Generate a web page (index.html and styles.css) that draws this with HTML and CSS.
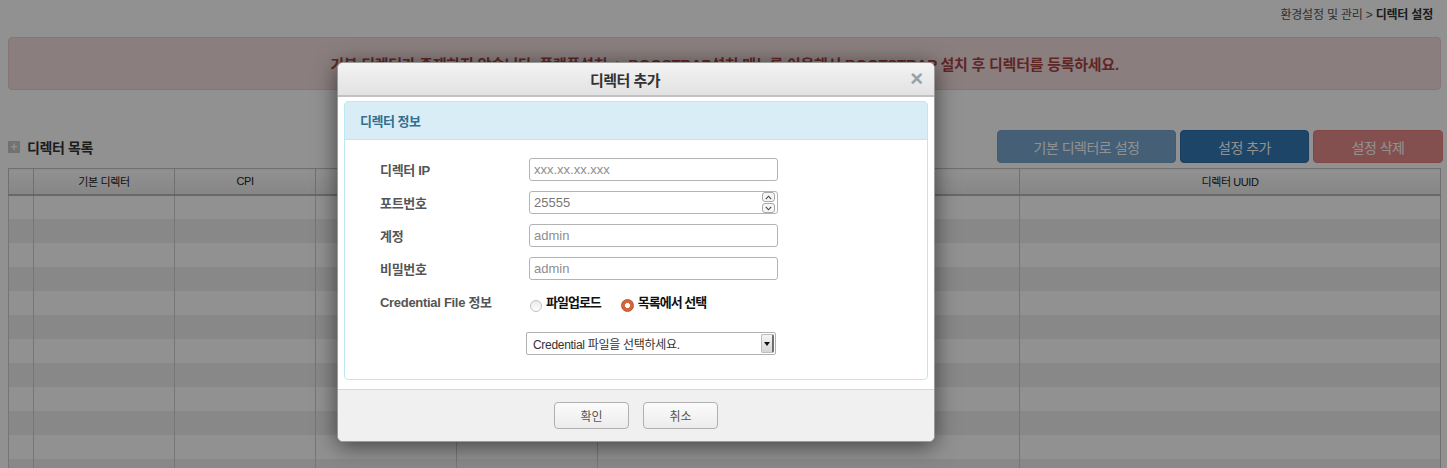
FILE: index.html
```html
<!DOCTYPE html>
<html lang="ko">
<head>
<meta charset="utf-8">
<title>디렉터 설정</title>
<link rel="stylesheet" href="styles.css">
</head>
<body>
<div class="page">
  <div class="breadcrumb"><span>환경설정 및 관리 &gt;&nbsp;</span><strong>디렉터 설정</strong></div>
  <div class="alert">기본 디렉터가 존재하지 않습니다. 플랫폼설치 -&gt; BOOSTRAP설치 메뉴를 이용해서 BOOTSTRAP 설치 후 디렉터를 등록하세요.</div>
  <div class="list-head">
    <h3 class="list-title"><span class="plus-icon">+</span>디렉터 목록</h3>
    <div class="actions">
      <button class="btn btn-primary is-disabled btn-default-set">기본 디렉터로 설정</button>
      <button class="btn btn-primary btn-add">설정 추가</button>
      <button class="btn btn-danger is-disabled btn-del">설정 삭제</button>
    </div>
  </div>
  <table class="grid">
    <colgroup>
      <col class="c-chk"><col class="c-std"><col class="c-std"><col class="c-std"><col class="c-std"><col class="c-wide"><col>
    </colgroup>
    <thead>
      <tr><th></th><th>기본 디렉터</th><th>CPI</th><th>디렉터 이름</th><th>디렉터 URL</th><th>디렉터 버전</th><th>디렉터 UUID</th></tr>
    </thead>
    <tbody>
      <tr><td></td><td></td><td></td><td></td><td></td><td></td><td></td></tr>
      <tr><td></td><td></td><td></td><td></td><td></td><td></td><td></td></tr>
      <tr><td></td><td></td><td></td><td></td><td></td><td></td><td></td></tr>
      <tr><td></td><td></td><td></td><td></td><td></td><td></td><td></td></tr>
      <tr><td></td><td></td><td></td><td></td><td></td><td></td><td></td></tr>
      <tr><td></td><td></td><td></td><td></td><td></td><td></td><td></td></tr>
      <tr><td></td><td></td><td></td><td></td><td></td><td></td><td></td></tr>
      <tr><td></td><td></td><td></td><td></td><td></td><td></td><td></td></tr>
      <tr><td></td><td></td><td></td><td></td><td></td><td></td><td></td></tr>
      <tr><td></td><td></td><td></td><td></td><td></td><td></td><td></td></tr>
      <tr><td></td><td></td><td></td><td></td><td></td><td></td><td></td></tr>
      <tr><td></td><td></td><td></td><td></td><td></td><td></td><td></td></tr>
    </tbody>
  </table>
</div>

<div class="overlay"></div>

<div class="modal">
  <div class="modal-header">
    <h4 class="modal-title">디렉터 추가</h4>
    <span class="close">×</span>
  </div>
  <div class="modal-body">
    <div class="panel">
      <div class="panel-heading">디렉터 정보</div>
      <div class="panel-body">
        <div class="form-row">
          <label class="form-label">디렉터 IP</label>
          <input class="field" type="text" placeholder="xxx.xx.xx.xxx">
        </div>
        <div class="form-row">
          <label class="form-label">포트번호</label>
          <div class="field field-number">
            <span class="num-value">25555</span>
            <span class="spin">
              <span class="spin-btn"><svg width="7" height="5" viewBox="0 0 7 5"><path d="M0.8 4.2 L3.5 1.2 L6.2 4.2" fill="none" stroke="#444" stroke-width="1.1"/></svg></span>
              <span class="spin-btn"><svg width="7" height="5" viewBox="0 0 7 5"><path d="M0.8 0.8 L3.5 3.8 L6.2 0.8" fill="none" stroke="#444" stroke-width="1.1"/></svg></span>
            </span>
          </div>
        </div>
        <div class="form-row">
          <label class="form-label">계정</label>
          <input class="field" type="text" placeholder="admin">
        </div>
        <div class="form-row">
          <label class="form-label">비밀번호</label>
          <input class="field" type="text" placeholder="admin">
        </div>
        <div class="form-row radio-row">
          <label class="form-label">Credential File 정보</label>
          <div class="radios">
            <span class="radio-opt"><span class="radio"></span><span class="radio-text">파일업로드</span></span>
            <span class="radio-opt"><span class="radio radio-on"></span><span class="radio-text">목록에서 선택</span></span>
          </div>
        </div>
        <div class="form-row select-row">
          <span class="form-label"></span>
          <div class="select">
            <span class="select-text">Credential 파일을 선택하세요.</span>
            <span class="select-arrow"><span class="tri"></span></span>
          </div>
        </div>
      </div>
    </div>
  </div>
  <div class="modal-footer">
    <button class="fbtn">확인</button>
    <button class="fbtn">취소</button>
  </div>
</div>
</body>
</html>
```

FILE: styles.css
```css
* { box-sizing: border-box; }

html, body {
  margin: 0;
  padding: 0;
}

body {
  width: 1447px;
  height: 468px;
  overflow: hidden;
  position: relative;
  background: #ffffff;
  color: #333;
  font-family: "Liberation Sans", "Noto Sans CJK KR", sans-serif;
}

.page {
  padding: 0 4px 0 8px;
}

/* breadcrumb */
.breadcrumb {
  height: 26px;
  display: flex;
  justify-content: flex-end;
  align-items: center;
  padding-right: 10px;
  font-size: 12px;
  color: #555;
  letter-spacing: -0.2px;
}
.breadcrumb strong { color: #333; }

/* alert */
.alert {
  margin: 11px 2px 0 0;
  height: 53px;
  display: flex;
  align-items: center;
  justify-content: center;
  background: #f2dede;
  border: 1px solid #ebccd1;
  border-radius: 4px;
  color: #a94442;
  font-size: 15px;
  font-weight: bold;
  letter-spacing: -0.25px;
}

/* list head */
.list-head {
  margin-top: 40px;
  height: 33px;
  display: flex;
  align-items: center;
}
.list-title {
  margin: 0;
  display: flex;
  align-items: center;
  gap: 7px;
  font-size: 14px;
  font-weight: bold;
  color: #333;
  letter-spacing: -0.4px;
}
.plus-icon {
  width: 12px;
  height: 12px;
  background: #c8c8c8;
  color: #fff;
  font-size: 12px;
  line-height: 12px;
  text-align: center;
  font-weight: bold;
  letter-spacing: 0;
}
.actions {
  margin-left: auto;
  display: flex;
  gap: 4px;
}
.btn {
  height: 33px;
  border: 1px solid transparent;
  border-radius: 4px;
  font-family: inherit;
  font-size: 14px;
  color: #fff;
  letter-spacing: -0.5px;
}
.btn-default-set { width: 179px; }
.btn-add { width: 129px; }
.btn-del { width: 130px; }
.btn-primary { background: #337ab7; border-color: #2e6da4; }
.btn-danger { background: #d9534f; border-color: #d43f3a; }
.is-disabled { opacity: 0.65; }

/* table */
.grid {
  margin-top: 5px;
  width: calc(100% - 2px);
  border-collapse: collapse;
  table-layout: fixed;
  border: 1px solid #c6c6c6;
}
.c-chk { width: 25px; }
.c-std { width: 141px; }
.c-wide { width: 422px; }
.grid th {
  height: 26px;
  padding: 0;
  font-size: 11px;
  font-weight: normal;
  color: #222;
  background: linear-gradient(#ffffff, #ececec);
  border-left: 1px solid #c6c6c6;
  border-bottom: 2px solid #b8b8b8;
  letter-spacing: -0.4px;
}
.grid td {
  height: 24px;
  padding: 0;
  border-left: 1px solid #cfcfcf;
}
.grid tbody tr:nth-child(even) td { background: #efefef; }

/* overlay */
.overlay {
  position: absolute;
  inset: 0;
  background: rgba(0, 0, 0, 0.43);
}

/* modal */
.modal {
  position: absolute;
  left: 337px;
  top: 62px;
  width: 598px;
  height: 380px;
  display: flex;
  flex-direction: column;
  background: #fff;
  border: 1px solid #9a9a9a;
  border-radius: 6px;
  overflow: hidden;
  box-shadow: 0 4px 22px rgba(0, 0, 0, 0.55);
}
.modal-header {
  height: 34px;
  flex: none;
  display: flex;
  align-items: center;
  justify-content: center;
  padding-right: 22px;
  position: relative;
  background: linear-gradient(#f3f3f3, #e2e2e2);
  border-bottom: 2px solid #c2c2c2;
}
.modal-title {
  margin: 0;
  font-size: 15px;
  font-weight: bold;
  color: #333;
  letter-spacing: -0.5px;
}
.close {
  position: absolute;
  right: 11px;
  top: 5px;
  font-size: 22px;
  line-height: 22px;
  font-weight: bold;
  color: #9aa0a4;
}
.modal-body {
  flex: 1;
  padding: 4px 6px 9px 6px;
}
.panel {
  height: 100%;
  border: 1px solid #bce8f1;
  border-radius: 4px;
  display: flex;
  flex-direction: column;
}
.panel-heading {
  height: 38px;
  flex: none;
  display: flex;
  align-items: center;
  padding-left: 15px;
  background: #d9edf7;
  border-bottom: 1px solid #bce8f1;
  color: #31708f;
  font-size: 13px;
  font-weight: bold;
  letter-spacing: -0.5px;
}
.panel-body {
  padding: 18px 0 0 35px;
}
.form-row {
  display: flex;
  align-items: center;
  height: 23px;
  margin-bottom: 10px;
}
.form-label {
  width: 149px;
  flex: none;
  font-size: 13px;
  font-weight: bold;
  color: #555;
  letter-spacing: -0.3px;
}
.field {
  width: 249px;
  height: 23px;
  border: 1px solid #b4b4b4;
  border-radius: 3px;
  padding: 0 4px;
  font-family: "Liberation Sans", "Noto Sans CJK KR", sans-serif;
  font-size: 13px;
  color: #666;
  background: #fff;
  outline: none;
}
.field::placeholder { color: #8e8e8e; }
.field-number {
  display: flex;
  align-items: center;
  justify-content: space-between;
  padding-right: 2px;
}
.num-value { color: #777; }
.spin {
  display: flex;
  flex-direction: column;
  gap: 1px;
}
.spin-btn {
  width: 13px;
  height: 10px;
  border: 1px solid #a8a8a8;
  border-radius: 3px;
  background: #f6f6f6;
  display: flex;
  align-items: center;
  justify-content: center;
}

.radios {
  display: flex;
  gap: 20px;
  padding-left: 1px;
}
.radio-opt {
  display: flex;
  align-items: center;
  gap: 4px;
}
.radio {
  width: 12px;
  height: 12px;
  border-radius: 50%;
  border: 1px solid #c2c2c2;
  background: linear-gradient(#eaeaea, #ffffff);
  margin-top: 8px;
}
.radio-on {
  width: 13px;
  height: 13px;
  border: 1px solid #b8532b;
  background: radial-gradient(circle, #ffffff 0 2.3px, #d4663c 2.8px);
}
.radio-text {
  font-size: 13px;
  font-weight: bold;
  color: #111;
  letter-spacing: -1px;
}

.select-row {
  margin-top: 19px;
}
.select-row .form-label { width: 146px; }
.select {
  width: 250px;
  height: 23px;
  border: 1px solid #b0b0b0;
  border-radius: 2px;
  display: flex;
  align-items: center;
  justify-content: space-between;
  padding: 1px 1px 1px 6px;
  background: #fff;
}
.select-text {
  font-size: 12px;
  color: #333;
  letter-spacing: -0.3px;
}
.select-arrow {
  width: 13px;
  height: 100%;
  display: flex;
  align-items: center;
  justify-content: center;
  background: linear-gradient(#f4f4f4, #d6d6d6);
  border: 1px solid #bdbdbd;
  border-right: 2px solid #6e6e6e;
  border-radius: 2px;
}
.tri {
  width: 0;
  height: 0;
  border-left: 3px solid transparent;
  border-right: 3px solid transparent;
  border-top: 4px solid #111;
}

.modal-footer {
  height: 52px;
  flex: none;
  display: flex;
  justify-content: center;
  align-items: flex-start;
  gap: 14px;
  padding-top: 12px;
  background: #f0f0f0;
  border-top: 1px solid #d6d6d6;
}
.fbtn {
  width: 75px;
  height: 27px;
  border: 1px solid #b0b0b0;
  border-radius: 4px;
  background: linear-gradient(#fbfbfb, #ececec);
  font-family: inherit;
  font-size: 12px;
  color: #555;
}
```
